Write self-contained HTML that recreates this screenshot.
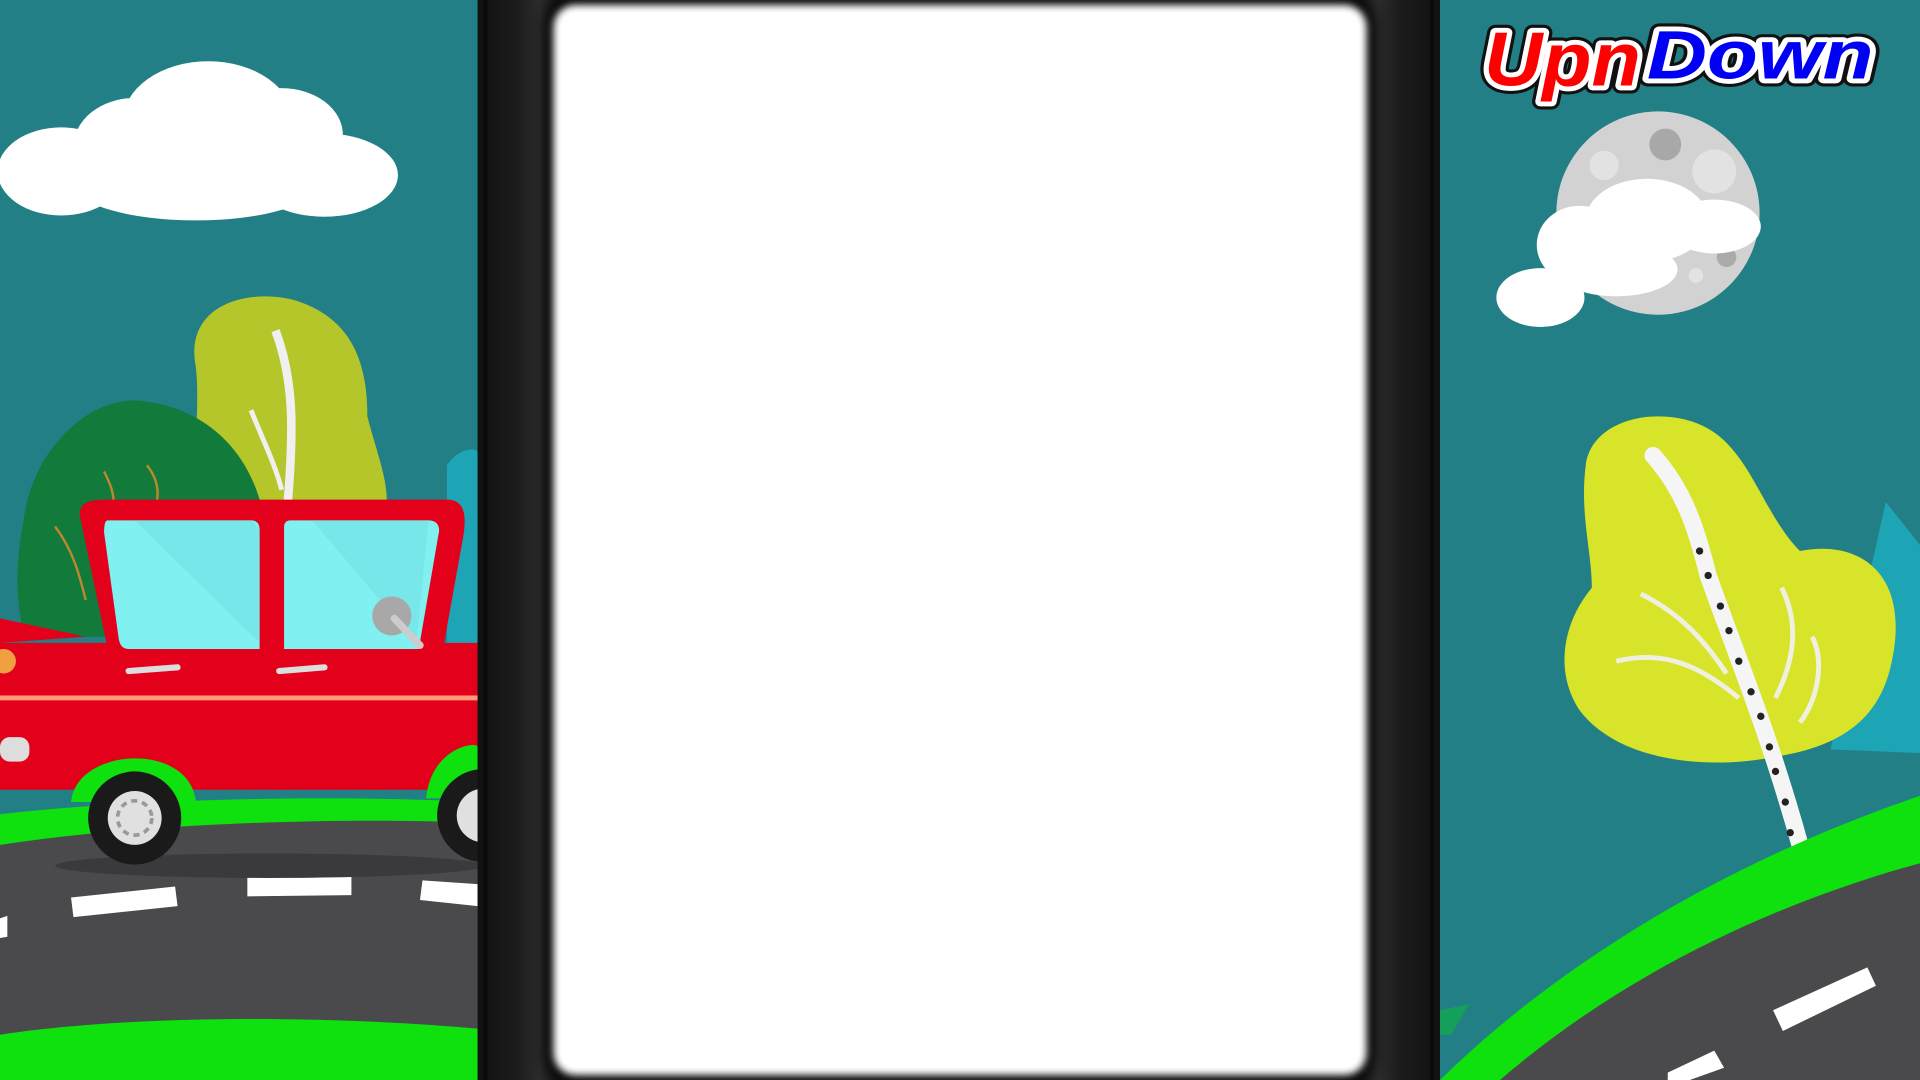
<!DOCTYPE html>
<html><head><meta charset="utf-8"><style>
html,body{margin:0;padding:0;width:1920px;height:1080px;overflow:hidden;background:#237f86}
svg{display:block}
</style></head><body>
<svg width="1920" height="1080" viewBox="0 0 1568 882" preserveAspectRatio="none" xmlns="http://www.w3.org/2000/svg">
<defs>
<filter id="blur" x="-5%" y="-5%" width="110%" height="110%"><feGaussianBlur stdDeviation="3"/></filter>
<filter id="blur2" x="-5%" y="-5%" width="110%" height="110%"><feGaussianBlur stdDeviation="6"/></filter>
<linearGradient id="fr" x1="0" x2="1" y1="0" y2="0">
<stop offset="0" stop-color="#111"/><stop offset="0.04" stop-color="#1b1b1b"/><stop offset="0.065" stop-color="#2c2c2c"/><stop offset="0.085" stop-color="#111"/>
<stop offset="0.915" stop-color="#111"/><stop offset="0.935" stop-color="#2c2c2c"/><stop offset="0.96" stop-color="#1b1b1b"/><stop offset="1" stop-color="#111"/>
</linearGradient>
</defs>
<rect width="1568" height="882" fill="#237f86"/>
<!-- LEFT PANEL -->
<g>
<g fill="#fff">
<ellipse cx="50" cy="140" rx="52" ry="36"/>
<ellipse cx="170" cy="100" rx="70" ry="50"/>
<ellipse cx="110" cy="120" rx="50" ry="40"/>
<ellipse cx="230" cy="110" rx="50" ry="38"/>
<ellipse cx="265" cy="143" rx="60" ry="34"/>
<ellipse cx="160" cy="150" rx="100" ry="30"/>
</g>
<path d="M160 300 C150 250 200 235 240 245 C290 260 300 300 300 340 C310 380 330 420 300 440 L170 440 C150 400 165 350 160 300Z" fill="#b5c62a"/>
<path d="M225 270 C240 310 240 350 235 410" stroke="#f0f0f0" stroke-width="7" fill="none"/>
<path d="M205 335 C215 360 225 380 230 400" stroke="#f0f0f0" stroke-width="4" fill="none"/>
<path d="M20 420 C30 360 80 320 120 328 C170 335 205 370 215 420 L215 520 L20 520 C10 480 15 450 20 420Z" fill="#127a3b"/>
<path d="M45 430 C60 450 65 470 70 490 M85 385 C90 395 95 405 92 420 M120 380 C128 390 130 400 128 410" stroke="#b8892d" stroke-width="2" fill="none"/>
<path d="M365 380 C375 365 390 365 390 370 L390 530 L365 530Z" fill="#1ea5b5"/>
<path d="M0 665 C130 650 300 650 390 655 L390 882 L0 882Z" fill="#0ee10e"/>
<path d="M0 690 C130 670 300 668 390 672 L390 850 C250 832 100 838 0 855Z" fill="#4a4a4c"/>
<path d="M0 845 C100 830 250 828 390 840 L390 882 L0 882Z" fill="#0ee10e"/>
<g fill="#fff">
<path d="M58 733 L143 724 L145 740 L60 749Z"/>
<path d="M202 716 L287 715 L287 731 L202 732Z"/>
<path d="M345 719 L390 722 L390 740 L343 735Z"/>
<path d="M0 750 L6 748 L6 765 L0 766Z"/>
</g>
<ellipse cx="220" cy="707" rx="175" ry="10" fill="#3a3a3c"/>
<path d="M65 420 C65 410 75 408 85 408 L365 408 C378 408 382 418 378 440 L360 540 L90 540Z" fill="#e3001b"/>
<path d="M0 525 L390 525 L390 645 L0 645Z" fill="#e3001b"/>
<path d="M0 505 L70 520 L0 525Z" fill="#e3001b"/>
<path d="M88 425 L205 425 C210 425 212 428 212 433 L212 530 L105 530 C100 530 98 527 97 522 L85 435 C85 428 86 425 88 425Z" fill="#80f0f0"/>
<path d="M237 425 L350 425 C357 425 360 430 358 437 L342 530 L232 530 L232 430 C232 427 234 425 237 425Z" fill="#80f0f0"/>
<path d="M110 425 L205 425 L212 432 L212 525Z" fill="#75e3e5" opacity=".7"/>
<path d="M255 425 L350 425 L340 525Z" fill="#75e3e5" opacity=".7"/>
<line x1="0" y1="570" x2="390" y2="570" stroke="#ff9a7a" stroke-width="4"/>
<path d="M105 548 L145 545" stroke="#ddd" stroke-width="5" stroke-linecap="round"/>
<path d="M228 548 L265 545" stroke="#ddd" stroke-width="5" stroke-linecap="round"/>
<circle cx="320" cy="503" r="16" fill="#a8a8a8"/>
<path d="M322 505 L343 527" stroke="#ccc" stroke-width="6" stroke-linecap="round"/>
<rect x="0" y="602" width="24" height="20" rx="8" fill="#ddd"/>
<circle cx="3" cy="540" r="10" fill="#f0a040"/>
<path d="M58 655 C62 610 155 605 160 655Z" fill="#0ee10e"/>
<path d="M348 652 C352 610 390 605 390 610 L390 652Z" fill="#0ee10e"/>
<circle cx="110" cy="668" r="38" fill="#1a1a1a"/>
<circle cx="110" cy="668" r="22" fill="#e0e0e0"/>
<circle cx="110" cy="668" r="14" fill="none" stroke="#999" stroke-width="3" stroke-dasharray="5 4"/>
<circle cx="395" cy="666" r="38" fill="#1a1a1a"/>
<circle cx="395" cy="666" r="22" fill="#e0e0e0"/>
</g>
<!-- RIGHT PANEL -->
<g>
<circle cx="1354" cy="174" r="83" fill="#d2d2d2"/>
<circle cx="1360" cy="118" r="13" fill="#a8a8a8"/>
<circle cx="1310" cy="135" r="12" fill="#e2e2e2"/>
<circle cx="1400" cy="140" r="18" fill="#e2e2e2"/>
<circle cx="1385" cy="225" r="6" fill="#e2e2e2"/>
<circle cx="1410" cy="210" r="8" fill="#aaa"/>
<g fill="#fff">
<ellipse cx="1258" cy="243" rx="36" ry="24"/>
<ellipse cx="1290" cy="200" rx="35" ry="32"/>
<ellipse cx="1345" cy="180" rx="50" ry="34"/>
<ellipse cx="1400" cy="185" rx="38" ry="22"/>
<ellipse cx="1320" cy="220" rx="50" ry="22"/>
</g>
<path d="M1540 410 L1568 445 L1568 615 L1495 612Z" fill="#1ea5b5"/>
<path d="M1295 380 C1300 340 1360 330 1395 350 C1430 370 1440 420 1470 450 C1520 440 1560 470 1545 540 C1535 590 1500 610 1450 618 C1390 630 1320 620 1290 580 C1270 550 1275 510 1300 480 C1300 450 1290 420 1295 380Z" fill="#d7e42a"/>
<path d="M1350 372 C1375 400 1385 430 1395 470 C1420 540 1445 600 1470 690" stroke="#f5f5f5" stroke-width="14" fill="none" stroke-linecap="round"/>
<g fill="#222">
<circle cx="1388" cy="450" r="3"/><circle cx="1395" cy="470" r="3"/><circle cx="1405" cy="495" r="3"/><circle cx="1412" cy="515" r="3"/><circle cx="1420" cy="540" r="3"/><circle cx="1430" cy="565" r="3"/><circle cx="1438" cy="585" r="3"/><circle cx="1445" cy="610" r="3"/><circle cx="1450" cy="630" r="3"/><circle cx="1458" cy="655" r="3"/><circle cx="1462" cy="680" r="3"/>
</g>
<path d="M1320 540 C1360 530 1390 545 1420 570 M1340 485 C1370 500 1390 520 1410 550 M1455 480 C1470 510 1465 540 1450 570 M1480 520 C1490 540 1485 570 1470 590" stroke="#f0f0e0" stroke-width="4" fill="none"/>
<path d="M1176 882 C1280 780 1420 700 1568 650 L1568 882Z" fill="#0ee10e"/>
<path d="M1225 882 C1320 800 1440 740 1568 705 L1568 882Z" fill="#4a4a4c"/>
<g fill="#fff">
<path d="M1448 825 L1525 790 L1532 805 L1456 842Z"/>
<path d="M1362 876 L1400 858 L1408 872 L1380 882 L1362 882Z"/>
</g>
<path d="M1176 825 L1200 820 L1185 845 L1176 845Z" fill="#14a05a"/>
<g font-family="Liberation Sans, sans-serif" font-weight="bold" font-style="italic" stroke-linejoin="round">
<text x="1212" y="70" font-size="62" fill="none" stroke="#111" stroke-width="13" textLength="128" lengthAdjust="spacingAndGlyphs">Upn</text>
<text x="1212" y="70" font-size="62" fill="#f00" stroke="#fff" stroke-width="8" paint-order="stroke" textLength="128" lengthAdjust="spacingAndGlyphs">Upn</text>
<text x="1345" y="64" font-size="56" fill="none" stroke="#111" stroke-width="13" textLength="185" lengthAdjust="spacingAndGlyphs">Down</text>
<text x="1345" y="64" font-size="56" fill="#0000f5" stroke="#fff" stroke-width="8" paint-order="stroke" textLength="185" lengthAdjust="spacingAndGlyphs">Down</text>
</g>
</g>
<!-- FRAME -->
<rect x="390" y="0" width="786" height="882" fill="url(#fr)"/>
<rect x="395" y="0" width="3" height="882" fill="#0a0a0a"/>
<rect x="1168" y="0" width="3" height="882" fill="#0a0a0a"/>
<rect x="446" y="0" width="676" height="882" rx="20" fill="#000" filter="url(#blur2)"/>
<rect x="452" y="4" width="664" height="874" rx="18" fill="#fff" filter="url(#blur)"/>
<rect x="458" y="10" width="652" height="862" rx="14" fill="#fff"/>
</svg>
</body></html>
